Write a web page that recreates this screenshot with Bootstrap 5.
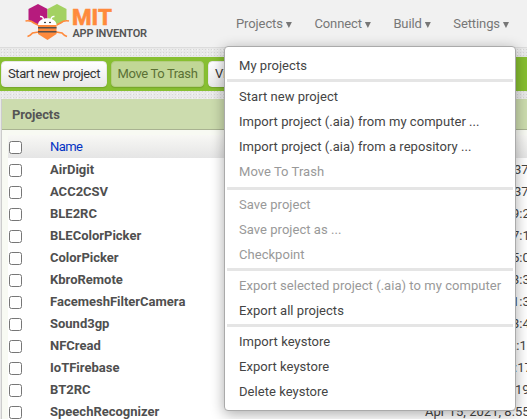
<!DOCTYPE html>
<html lang="en">
<head>
<meta charset="utf-8">
<title>MIT App Inventor</title>
<link href="https://cdn.jsdelivr.net/npm/bootstrap@5.3.0/dist/css/bootstrap.min.css" rel="stylesheet">
<style>
body{width:527px;height:419px;font:13px/22px Roboto,sans-serif;letter-spacing:.04px;color:#444;background-color:#e9e9e9;background-image:radial-gradient(circle,#d6d6d6 .7px,transparent .9px),radial-gradient(circle,#f3f3f3 .7px,transparent .9px);background-size:3px 3px,5px 4px}
.top-bar{height:48px;background:#f1f1f1;border-bottom:1px solid #dcdcdc}
.brand-logo{width:130px;height:48px;margin-left:22px}
.menus{margin-left:84px;padding-top:13px;color:#777;letter-spacing:-.1px;gap:22.5px}
.menus span{white-space:nowrap}
.menus i{display:inline-block;width:6px;height:6px;margin-left:3px;background:currentColor;clip-path:polygon(0 0,100% 0,50% 100%)}
.tool-bar{height:34px;margin-top:9px;background:#87bf31;padding:4px 1px;gap:4px}
.tool-bar .btn{height:26px;font:13px/24px Roboto,sans-serif;letter-spacing:-.36px;padding:0;border:1px solid #e7e7e7;border-radius:4px;background:linear-gradient(#fff,#e9e9e9);color:#333;white-space:nowrap;box-shadow:0 1px 1px #0002}
.tool-bar .btn.dim{background:#c1d796;border-color:#b3cd80;color:#5b7135}
.panel{margin:8px 0 0 2px;height:320px;background:#f8faf3;box-shadow:-1px 0 #ccc}
.panel-title{height:31px;background:#ccdcae;border-bottom:1px solid #a9b392;padding:0 10px;line-height:31px;font-weight:700;letter-spacing:-.1px;color:#555}
.grid{margin:5px 0 0 6px;background:#fff}
.line{height:22px;padding-left:1px}
.line.head{height:23px;background:linear-gradient(#f8f8f5,#e5e5e5)}
.line input{width:13px;height:13px;margin:0;flex:none;position:relative;top:1px}
.label-cell{padding:1px 0 0 28px;font-weight:700;letter-spacing:0;color:#4f4f4f}
.line.head .label-cell{font-weight:400;color:#0433c4;letter-spacing:-.6px;padding-top:0}
.stamp{white-space:nowrap;padding-top:1px}
.drop{left:224px;top:46px;width:292px;height:365px;background:#fff;border:1px solid #aaa;border-radius:4px;box-shadow:0 3px 14px #0005;padding:6px 2px;line-height:25px;color:#444}
.drop div{height:25px;padding-left:12px;white-space:nowrap}
.drop .off{color:#999}
.drop hr{height:3px;margin:1px 0 2px;border:0;background:#e5e5e5;opacity:1}
.drop .wide-gap{margin-top:3px}
</style>
<script src="https://cdn.jsdelivr.net/npm/bootstrap@5.3.0/dist/js/bootstrap.bundle.min.js"></script>
</head>
<body class="overflow-hidden position-relative">
<header class="top-bar d-flex">
<svg class="brand-logo flex-shrink-0" viewBox="22 0 130 48">
<path d="M38 4l9.500 5v11L38 25.500 28.500 20V9z" fill="#b61b7d"/>
<path d="M57 4l9.500 5v11L57 25.500 47.500 20V9z" fill="#a3d162"/>
<path d="M25.500 21q5-1 8.500 2l4 2M69 21q-5-1-8.500 2l-4 2M27.500 36.500q3-1 5-3.500l6-1M67 36.500q-3-1-5-3.500l-6-1" fill="none" stroke="#ff8a3c" stroke-width="1.700"/>
<path d="M38 25h18.500v9L47.500 40 38 34z" fill="#ff8a3c"/>
<path d="M38 25c0-9 18.500-9 18.500 0z" fill="#fff"/>
<path d="M40 16.500q3-.5 3.500 3M54.500 16.500q-3-.5-3.500 3" fill="none" stroke="#fff" stroke-width="1.500"/>
<path d="M38 27.700h18.500M38 31.700h18.500" stroke="#58514c" stroke-width="1.500"/>
<circle cx="45" cy="22.500" r=".8"/><circle cx="50" cy="22.500" r=".8"/>
<text x="72" y="25" font-family="Roboto,sans-serif" font-weight="800" font-size="22" textLength="40" lengthAdjust="spacingAndGlyphs" fill="#ff8a3c" stroke="#ff8a3c" stroke-width=".5">MIT</text>
<text x="72.500" y="37" font-family="Roboto,sans-serif" font-weight="600" font-size="11" textLength="74.500" lengthAdjust="spacing" fill="#555">APP INVENTOR</text>
</svg>
<nav class="menus d-flex"><span>Projects<i></i></span><span>Connect<i></i></span><span>Build<i></i></span><span>Settings<i></i></span></nav>
</header>
<div class="tool-bar d-flex">
<button class="btn" style="width:106px">Start new project</button><button class="btn dim" style="width:93px">Move To Trash</button><button class="btn text-start" style="width:110px;padding-left:6px">View Trash</button>
</div>
<main class="panel">
<div class="panel-title">Projects</div>
<div class="grid" id="grid"><div class="line head d-flex align-items-center"><input type="checkbox"><span class="label-cell">Name</span></div></div>
</main>
<div class="drop position-absolute">
<div>My projects</div><hr>
<div>Start new project</div><div>Import project (.aia) from my computer ...</div><div>Import project (.aia) from a repository ...</div><div class="off">Move To Trash</div><hr class="wide-gap">
<div class="off">Save project</div><div class="off">Save project as ...</div><div class="off">Checkpoint</div><hr>
<div class="off">Export selected project (.aia) to my computer</div><div>Export all projects</div><hr>
<div>Import keystore</div><div>Export keystore</div><div>Delete keystore</div>
</div>
<script>
const rows=[['AirDigit','37',514],['ACC2CSV','37',514],['BLE2RC','9:2',512],['BLEColorPicker','7:1',512],['ColorPicker','5:0',512],['KbroRemote','3:3',512],['FacemeshFilterCamera','1:3',512],['Sound3gp','3:4',512],['NFCread','2:1',509],['IoTFirebase',':17',514],['BT2RC','19',515],['SpeechRecognizer','Apr 15, 2021, 8:55',425]];
document.getElementById('grid').insertAdjacentHTML('beforeend',rows.map(([n,t,x])=>`<div class="line d-flex align-items-center"><input type="checkbox"><span class="label-cell flex-shrink-0" style="width:${x-22}px">${n}</span><span class="stamp">${t}</span></div>`).join(''));
</script>
</body>
</html>
